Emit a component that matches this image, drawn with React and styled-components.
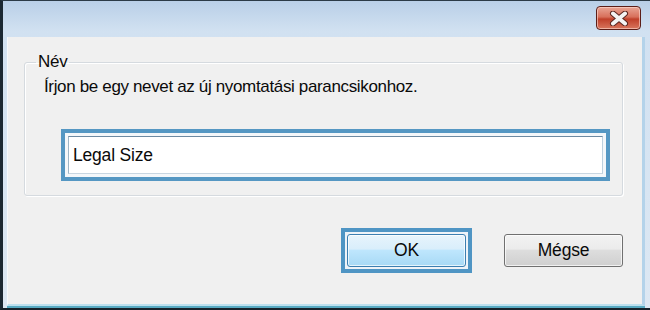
import styled, { createGlobalStyle } from "styled-components";

const Global = createGlobalStyle`
  html, body {
    margin: 0;
    padding: 0;
    background: #0f1a22;
  }
  body {
    font-family: "Liberation Sans", Arial, sans-serif;
  }
`;

const Frame = styled.div`
  width: 650px;
  height: 310px;
  box-sizing: border-box;
  border-left: 3px solid #1b2832;
  border-top: 1px solid #2b3a46;
  border-bottom: 2px solid #16222b;
  background: linear-gradient(#b9cfe7, #d1e1f1 30px, #dde8f3);
  display: flex;
  flex-direction: column;
  overflow: hidden;
`;

const TitleBar = styled.div`
  height: 36px;
  display: flex;
  justify-content: flex-end;
  align-items: flex-start;
  padding: 5px 9px 0 0;
  box-sizing: border-box;
`;

const CloseBtn = styled.div`
  width: 45px;
  height: 24px;
  box-sizing: border-box;
  border: 1px solid #5c1e18;
  border-radius: 4px;
  background: linear-gradient(#e9a595, #d8705b 45%, #c0402a 55%, #d9765e);
  box-shadow: inset 0 0 0 1px rgba(255, 220, 210, 0.6);
  display: flex;
  align-items: center;
  justify-content: center;
`;

const Body = styled.div`
  flex: 1;
  margin: 0 5px 2px 4px;
  border-left: 1px solid #f6f9fc;
  border-bottom: 2px solid #bde0ee;
  border-right: 3px solid #b4d3ea;
  box-shadow: 0 2px 0 #58aac2;
  background: #f0f0f0;
  display: flex;
  flex-direction: column;
  padding: 15px 19px 0 16px;
`;

const Group = styled.fieldset`
  margin: 0;
  height: 144px;
  box-sizing: border-box;
  border: 1px solid #d5dadf;
  border-radius: 3px;
  box-shadow: 1px 1px 0 #fff, inset 1px 1px 0 #fff;
  padding: 0;
`;

const Legend = styled.legend`
  font-size: 17px;
  color: #0a0a0a;
  padding: 0 2px;
  margin-left: 11px;
  letter-spacing: -0.3px;
`;

const GroupContent = styled.div`
  padding: 0 12px 0 19px;
`;

const Hint = styled.div`
  font-size: 17px;
  color: #0a0a0a;
  letter-spacing: -0.35px;
  margin-top: 5px;
`;

const Focus = styled.div`
  margin: 32px 0 0 17px;
  border: 4px solid #5597c3;
  padding: 3px;
  background: #f4f7fa;
`;

const Input = styled.div`
  height: 38px;
  box-sizing: border-box;
  border: 1px solid;
  border-color: #6d8aa2 #bdd0de #c9d6e1 #9fb5c6;
  background: #fff;
  display: flex;
  align-items: center;
  padding-left: 4px;
  font-size: 17.5px;
  color: #0a0a0a;
  letter-spacing: -0.2px;
`;

const Buttons = styled.div`
  display: flex;
  justify-content: flex-end;
  align-items: center;
  gap: 32px;
  margin-top: 32px;
`;

const FocusRing = styled.div`
  border: 4px solid #4f95c4;
  padding: 2px;
  background: #eef3f8;
  display: flex;
`;

const Button = styled.div`
  width: 119px;
  height: 33px;
  box-sizing: border-box;
  border: 1px solid ${(p) => (p.$primary ? "#3c7fb1" : "#707070")};
  border-radius: 3px;
  background: ${(p) =>
    p.$primary
      ? "linear-gradient(#e7f4fc, #d9eefb 45%, #bee6fd 50%, #a7d9f5)"
      : "linear-gradient(#f2f2f2, #ebebeb 45%, #dddddd 50%, #cfcfcf)"};
  box-shadow: inset 0 0 0 1px rgba(255, 255, 255, 0.7);
  display: flex;
  align-items: center;
  justify-content: center;
  font-size: 17.5px;
  color: #0a0a0a;
  letter-spacing: -0.2px;
`;

function CloseIcon() {
  return (
    <svg width="20" height="15" viewBox="0 0 20 15">
      <path
        d="M4 2.5 L16 12.5 M16 2.5 L4 12.5"
        stroke="#5b2620"
        strokeWidth="6"
        strokeLinecap="round"
      />
      <path
        d="M4 2.5 L16 12.5 M16 2.5 L4 12.5"
        stroke="#f4f4f4"
        strokeWidth="4"
        strokeLinecap="round"
      />
    </svg>
  );
}

export default function App() {
  return (
    <>
      <Global />
      <Frame>
        <TitleBar>
          <CloseBtn>
            <CloseIcon />
          </CloseBtn>
        </TitleBar>
        <Body>
          <Group>
            <Legend>Név</Legend>
            <GroupContent>
              <Hint>Írjon be egy nevet az új nyomtatási parancsikonhoz.</Hint>
              <Focus>
                <Input>Legal Size</Input>
              </Focus>
            </GroupContent>
          </Group>
          <Buttons>
            <FocusRing>
              <Button $primary>OK</Button>
            </FocusRing>
            <Button>Mégse</Button>
          </Buttons>
        </Body>
      </Frame>
    </>
  );
}
